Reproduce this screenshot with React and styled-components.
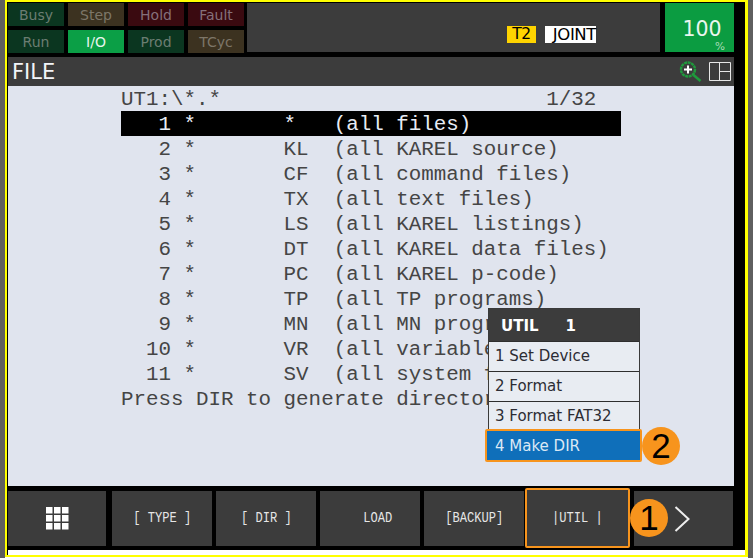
import React from 'react';
import styled, { createGlobalStyle } from 'styled-components';

const GlobalStyle = createGlobalStyle`
  html, body {
    margin: 0;
    padding: 0;
    background: #fff;
  }
`;

const Page = styled.div`
  box-sizing: border-box;
  width: 753px;
  height: 558px;
  overflow: hidden;
  background: #fff;
  border-left: 5px solid #5f5f5f;
  border-right: 5px solid #5f5f5f;
`;

const Frame = styled.div`
  box-sizing: border-box;
  height: 557px;
  border: solid #ffff00;
  border-width: 2px 3px 2px 2px;
  background: #000;
  display: flex;
  flex-direction: column;
`;

const Screen = styled.div`
  height: 548px;
  background: #000;
  padding: 0 11px 0 1px;
  display: flex;
  flex-direction: column;
`;

const Footer = styled.div`
  height: 5px;
  background: #fff;
  margin-left: 1px;
`;

const StatusBar = styled.div`
  height: 53px;
  padding-top: 1px;
  box-sizing: border-box;
  display: flex;
  gap: 4px;
`;

const LampGrid = styled.div`
  display: grid;
  grid-template-columns: repeat(4, 56px);
  grid-auto-rows: 23px;
  gap: 4px;
`;

const lampColors = {
  green: ['#0b3620', '#6b7d72'],
  olive: ['#3c3220', '#7d7668'],
  red: ['#3a0a10', '#85707a'],
  on: ['#0b9f46', '#e8f5ec'],
};

const Lamp = styled.div`
  display: flex;
  align-items: center;
  justify-content: center;
  background: ${p => lampColors[p.$tone][0]};
  color: ${p => lampColors[p.$tone][1]};
  font: 14px 'DejaVu Sans', sans-serif;
`;

const ModePanel = styled.div`
  width: 413px;
  height: 49px;
  margin-left: -1px;
  background: #3c3c3c;
  display: flex;
  align-items: flex-end;
  justify-content: flex-end;
  gap: 9px;
  padding: 0 64px 9px 0;
  box-sizing: border-box;
`;

const ModeTag = styled.span`
  width: ${p => (p.$joint ? 51 : 29)}px;
  height: 17px;
  box-sizing: border-box;
  display: flex;
  justify-content: ${p => (p.$joint ? 'flex-end' : 'center')};
  background: ${p => (p.$joint ? '#fff' : '#ffd400')};
  color: #000;
  font: ${p => (p.$joint ? 16.5 : 15.5)}px/17px 'DejaVu Sans', sans-serif;
  letter-spacing: -0.4px;
`;

const Override = styled.div`
  width: 69px;
  height: 49px;
  margin-left: 1px;
  background: #0b9c41;
  color: #eaf6ee;
  position: relative;
  display: flex;
  justify-content: center;
  padding: 12px 0 0 5px;
  box-sizing: border-box;
  font: 20.5px/28px 'DejaVu Sans', sans-serif;
`;

const Percent = styled.span`
  position: absolute;
  right: 9px;
  bottom: 1px;
  font: 10.5px/10px 'DejaVu Sans', sans-serif;
  color: #a8dcb8;
`;

const TitleBar = styled.div`
  margin-top: 2px;
  height: 29px;
  background: #3c3c3c;
  display: flex;
  align-items: center;
  justify-content: space-between;
  padding: 0 3px 0 4px;
  color: #f2f4f8;
  font: 21px 'DejaVu Sans', sans-serif;
`;

const TitleIcons = styled.div`
  display: flex;
  align-items: center;
  gap: 7px;
`;

const Content = styled.div`
  height: 400px;
  background: #e0e4ee;
  position: relative;
  padding: 0 0 0 113px;
  box-sizing: border-box;
  color: #454545;
  font: 20.85px/25px 'Liberation Mono', monospace;
`;

const Line = styled.div`
  height: 25px;
  width: 500px;
  box-sizing: border-box;
  padding-top: 1px;
  white-space: pre;
  background: ${p => (p.$active ? '#000' : 'transparent')};
  color: ${p => (p.$active ? '#e8ecf4' : 'inherit')};
`;

const Menu = styled.div`
  position: absolute;
  left: 480px;
  top: 222px;
  width: 152px;
  box-sizing: border-box;
  border: 1px solid #3a3a3a;
  background: #e8ecf2;
  font: 15px 'DejaVu Sans', sans-serif;
  color: #2c2c34;
`;

const MenuHead = styled.div`
  height: 32px;
  box-sizing: border-box;
  padding: 1px 0 0 12px;
  background: #3c3c3c;
  color: #fff;
  font-weight: bold;
  display: flex;
  align-items: center;
  gap: 27px;
`;

const MenuItem = styled.div`
  height: 30px;
  box-sizing: border-box;
  border-top: 1px solid #2e2e2e;
  display: flex;
  align-items: center;
  padding: 0 0 2px 6px;
`;

const SelectedItem = styled.div`
  position: absolute;
  left: -4px;
  bottom: -1px;
  width: 157px;
  height: 33px;
  box-sizing: border-box;
  border: 2px solid #f7941d;
  border-radius: 2px;
  background: #0f6fba;
  color: #dbe8f5;
  display: flex;
  align-items: center;
  padding-left: 8px;
`;

const Callout = styled.div`
  position: absolute;
  width: 38px;
  height: 38px;
  border-radius: 50%;
  background: #f7941d;
  color: #000;
  display: flex;
  align-items: center;
  justify-content: center;
  font: 35px 'Liberation Sans', sans-serif;
  right: ${p => p.$right}px;
  top: ${p => p.$top}px;
`;

const KeyRow = styled.div`
  margin-top: 5px;
  height: 55px;
  display: flex;
  align-items: flex-start;
`;

const SoftKey = styled.div`
  box-sizing: border-box;
  width: ${p => p.$w || 100}px;
  height: 55px;
  flex: none;
  margin-right: ${p => (p.$gap === undefined ? 4 : p.$gap)}px;
  padding-right: ${p => p.$shift || 0}px;
  background: #3c3c3c;
  color: #e6e6e6;
  display: flex;
  align-items: center;
  justify-content: center;
  ${p =>
    p.$focus &&
    `
    position: relative;
    z-index: 1;
    border: 2px solid #f7941d;
    border-radius: 2px;
    margin-top: -3px;
    height: 60px;
  `}
`;

const KeyLabel = styled.span`
  white-space: pre;
  font: 13px 'Liberation Mono', monospace;
  transform: scale(0.93, 1.12);
`;

const Rows = [
  '   1 *       *   (all files)',
  '   2 *       KL  (all KAREL source)',
  '   3 *       CF  (all command files)',
  '   4 *       TX  (all text files)',
  '   5 *       LS  (all KAREL listings)',
  '   6 *       DT  (all KAREL data files)',
  '   7 *       PC  (all KAREL p-code)',
  '   8 *       TP  (all TP programs)',
  '   9 *       MN  (all MN programs)',
  '  10 *       VR  (all variable files)',
  '  11 *       SV  (all system files)',
];

const lamps = [
  ['Busy', 'green'],
  ['Step', 'olive'],
  ['Hold', 'red'],
  ['Fault', 'red'],
  ['Run', 'green'],
  ['I/O', 'on'],
  ['Prod', 'green'],
  ['TCyc', 'olive'],
];

const ZoomIcon = () => (
  <svg width="23" height="21" viewBox="0 0 23 21" fill="none">
    <circle cx="9" cy="8.5" r="7" stroke="#1f9a3c" strokeWidth="2.4" strokeDasharray="3 0.6" />
    <path d="M14.5 14l7 6" stroke="#1f9a3c" strokeWidth="2.6" />
    <path d="M5 8.5h8M9 4.5v8" stroke="#fff" strokeWidth="2" />
  </svg>
);

const SplitIcon = () => (
  <svg width="22" height="19" viewBox="0 0 22 19" fill="none" stroke="#e6e6e6">
    <path d="M.5.5h21v18H.5zM10.5.5v18M10.5 9.5h11" />
  </svg>
);

const GridIcon = () => (
  <svg width="23" height="23" viewBox="0 0 23 23" fill="#fff">
    {[0, 8, 16].map(y =>
      [0, 8, 16].map(x => <rect key={`${x}-${y}`} x={x} y={y} width="6.5" height="6.5" />)
    )}
  </svg>
);

const NextIcon = () => (
  <svg width="16" height="26" viewBox="0 0 16 26" fill="none">
    <path d="M1.5 1l13 12-13 12" stroke="#eee" strokeWidth="2" />
  </svg>
);

const App = () => (
  <Page>
    <GlobalStyle />
    <Frame>
      <Screen>
        <StatusBar>
          <LampGrid>
            {lamps.map(([label, tone]) => (
              <Lamp key={label} $tone={tone}>
                {label}
              </Lamp>
            ))}
          </LampGrid>
          <ModePanel>
            <ModeTag>T2</ModeTag>
            <ModeTag $joint>JOINT</ModeTag>
          </ModePanel>
          <Override>
            100
            <Percent>%</Percent>
          </Override>
        </StatusBar>
        <TitleBar>
          FILE
          <TitleIcons>
            <ZoomIcon />
            <SplitIcon />
          </TitleIcons>
        </TitleBar>
        <Content>
          <Line>{'UT1:\\*.*                          1/32'}</Line>
          {Rows.map((row, i) => (
            <Line key={row} $active={i === 0}>
              {row}
            </Line>
          ))}
          <Line>Press DIR to generate directory</Line>
          <Menu>
            <MenuHead>
              <span>UTIL</span>
              <span>1</span>
            </MenuHead>
            <MenuItem>1 Set Device</MenuItem>
            <MenuItem>2 Format</MenuItem>
            <MenuItem>3 Format FAT32</MenuItem>
            <MenuItem />
            <SelectedItem>4 Make DIR</SelectedItem>
          </Menu>
          <Callout $right={54} $top={341}>
            2
          </Callout>
        </Content>
        <KeyRow>
          <SoftKey $w={98} $gap={6}>
            <GridIcon />
          </SoftKey>
          <SoftKey>
            <KeyLabel>[ TYPE ]</KeyLabel>
          </SoftKey>
          <SoftKey>
            <KeyLabel>[ DIR ]</KeyLabel>
          </SoftKey>
          <SoftKey>
            <KeyLabel>{'  LOAD'}</KeyLabel>
          </SoftKey>
          <SoftKey $gap={1}>
            <KeyLabel>[BACKUP]</KeyLabel>
          </SoftKey>
          <SoftKey $w={105} $focus>
            <KeyLabel>|UTIL |</KeyLabel>
            <Callout $right={-40} $top={9}>
              1
            </Callout>
          </SoftKey>
          <SoftKey $w={99} $gap={0} $shift={3}>
            <NextIcon />
          </SoftKey>
        </KeyRow>
      </Screen>
      <Footer />
    </Frame>
  </Page>
);

export default App;
